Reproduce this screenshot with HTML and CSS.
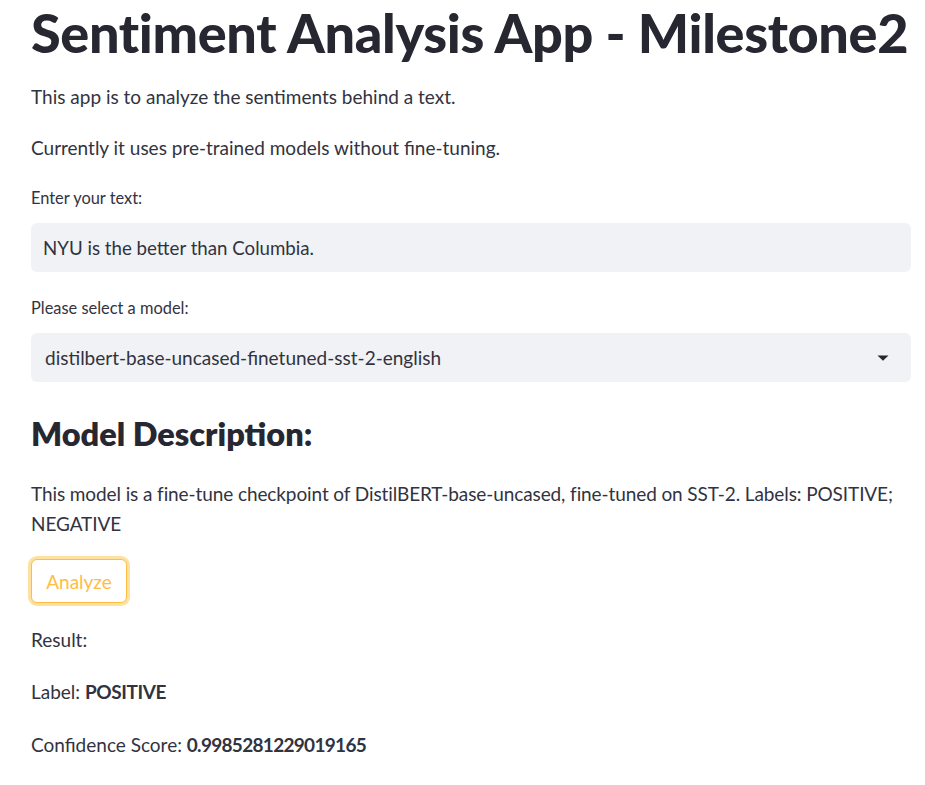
FILE: index.html
```html
<!DOCTYPE html>
<html lang="en">
<head>
<meta charset="utf-8">
<title>Sentiment Analysis App - Milestone2</title>
<link rel="stylesheet" href="styles.css">
</head>
<body>
<main class="app">
  <h1 class="title">Sentiment Analysis App - Milestone2</h1>
  <p class="text p1">This app is to analyze the sentiments behind a text.</p>
  <p class="text p2">Currently it uses pre-trained models without fine-tuning.</p>
  <label class="label l1" for="txt">Enter your text:</label>
  <div class="field" id="txt">NYU is the better than Columbia.</div>
  <label class="label l2">Please select a model:</label>
  <div class="field select">
    <span>distilbert-base-uncased-finetuned-sst-2-english</span>
    <svg class="caret" width="12" height="6" viewBox="0 0 12 6"><path d="M0.5 0.5 H11.5 L6 5.8 Z" fill="#262730"/></svg>
  </div>
  <h3 class="subtitle">Model Description:</h3>
  <p class="text desc">This model is a fine-tune checkpoint of DistilBERT-base-uncased, fine-tuned on SST-2. Labels: POSITIVE; NEGATIVE</p>
  <div class="btn-row"><button class="btn">Analyze</button></div>
  <p class="text r1">Result:</p>
  <p class="text r2">Label: <strong>POSITIVE</strong></p>
  <p class="text r3">Confidence Score: <strong>0.9985281229019165</strong></p>
</main>
</body>
</html>
```

FILE: styles.css
```css
html, body {
  margin: 0;
  padding: 0;
  background: #ffffff;
}
body {
  font-family: "Lato", "Noto Sans", sans-serif;
  color: #31333f;
}
.app {
  display: flex;
  flex-direction: column;
  padding: 0 14px 0 31px;
}
.title {
  margin: 0;
  font-size: 54px;
  line-height: 66px;
  font-weight: 900;
  color: #262730;
  white-space: nowrap;
  letter-spacing: -0.35px;
}
.text {
  margin: 0;
  font-size: 19px;
  line-height: 30px;
}
.p1 { margin-top: 16px; }
.p2 { margin-top: 21px; }
.label {
  display: block;
  font-size: 16.4px;
  line-height: 24px;
}
.l1 { margin-top: 23px; }
.l2 { margin-top: 24px; }
.field {
  margin-top: 13px;
  height: 49px;
  box-sizing: border-box;
  background: #f0f2f6;
  border-radius: 6px;
  padding: 0 12px;
  display: flex;
  align-items: center;
  font-size: 18.7px;
  color: #31333f;
}
.select {
  padding: 0 22px 0 14px;
  justify-content: space-between;
  font-size: 19px;
}
.caret { display: block; }
.subtitle {
  margin: 30px 0 0;
  font-size: 32.5px;
  line-height: 44px;
  font-weight: 800;
  color: #262730;
}
.desc { margin-top: 23px; letter-spacing: -0.1px; }
.btn-row {
  margin-top: 20px;
  display: flex;
}
.btn {
  height: 44px;
  width: 96px;
  box-sizing: border-box;
  background: #ffffff;
  border: 1px solid #ffbd45;
  border-radius: 6px;
  box-shadow: 0 0 0 3px rgba(255, 200, 80, 0.55);
  color: #ffbd45;
  font-family: inherit;
  font-size: 19px;
  padding: 0;
}
.r1 { margin-top: 22px; }
.r2 { margin-top: 22px; }
.r3 { margin-top: 23px; }
strong { font-weight: 700; }
.r2 strong { letter-spacing: -0.4px; }
.r3 strong { letter-spacing: -0.7px; }
```
